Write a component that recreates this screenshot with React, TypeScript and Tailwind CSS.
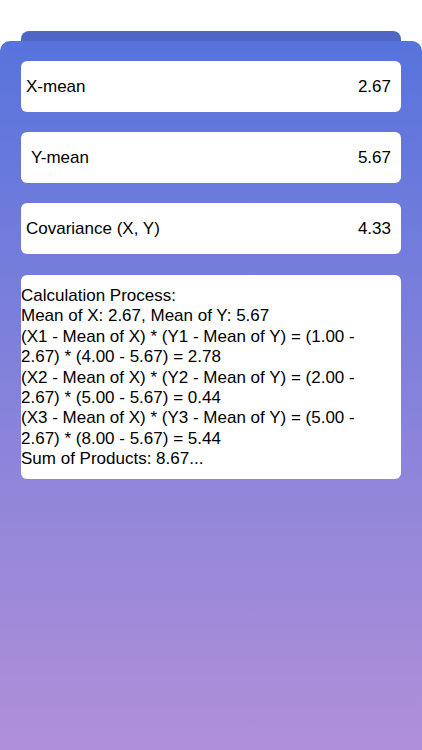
import React from "react";

interface StatRowProps {
  label: string;
  value: string;
  indent?: boolean;
}

function StatRow({ label, value, indent }: StatRowProps) {
  return (
    <div className="flex h-[51px] items-center justify-between rounded-md bg-white pr-[10px]">
      <p className={indent ? "pl-[10px]" : "pl-[5px]"}>{label}</p>
      <p>{value}</p>
    </div>
  );
}

const processLines = [
  "Calculation Process:",
  "Mean of X: 2.67, Mean of Y: 5.67",
  "(X1 - Mean of X) * (Y1 - Mean of Y) = (1.00 - 2.67) * (4.00 - 5.67) = 2.78",
  "(X2 - Mean of X) * (Y2 - Mean of Y) = (2.00 - 2.67) * (5.00 - 5.67) = 0.44",
  "(X3 - Mean of X) * (Y3 - Mean of Y) = (5.00 - 2.67) * (8.00 - 5.67) = 5.44",
  "Sum of Products: 8.67...",
];

export default function App() {
  return (
    <div
      className="flex min-h-[750px] flex-col bg-white pt-[31px] text-[17px] text-black"
      style={{ fontFamily: '"Liberation Sans", Arial, sans-serif' }}
    >
      {/* back sheet */}
      <div className="mx-[21px] h-[10px] rounded-t-lg bg-[#4f66c6]" />

      {/* main sheet */}
      <div className="flex flex-1 flex-col gap-[20px] rounded-t-[10px] bg-linear-to-b from-[#5773dc] to-[#b08fd8] px-[21px] pt-[20px]">
        <StatRow label="X-mean" value="2.67" />
        <StatRow label="Y-mean" value="5.67" indent />
        <StatRow label="Covariance (X, Y)" value="4.33" />

        <div className="mt-[1px] rounded-md bg-white pt-[11px] pr-[12px] pb-[9px] leading-[20.4px]">
          {processLines.map((line, i) => (
            <p key={i}>{line}</p>
          ))}
        </div>
      </div>
    </div>
  );
}
